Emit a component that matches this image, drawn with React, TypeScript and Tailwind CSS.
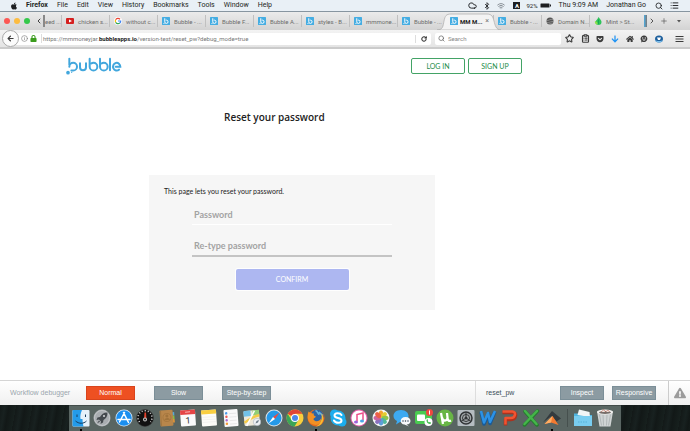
import type { ReactNode } from 'react';
import {
  Bluetooth,
  ChevronLeft,
  ChevronRight,
  ClipboardList,
  Cloud,
  Info,
  List,
  Plus,
  RotateCw,
  Search,
  Star,
  Wifi,
} from 'lucide-react';
import { FaApple, FaArrowDown, FaArrowLeft, FaExclamationTriangle, FaGetPocket, FaHome, FaLock } from 'react-icons/fa';

const menus = ['File', 'Edit', 'View', 'History', 'Bookmarks', 'Tools', 'Window', 'Help'];

const tabs = [
  { icon: 'youtube', title: 'chicken s...' },
  { icon: 'google', title: 'without c...' },
  { icon: 'bubble', title: 'Bubble - ...' },
  { icon: 'bubble', title: 'Bubble F...' },
  { icon: 'bubble', title: 'Bubble A...' },
  { icon: 'bubble', title: 'styles - B...' },
  { icon: 'bubble', title: 'mmmone...' },
  { icon: 'bubble', title: 'Bubble - ...' },
  { icon: 'bubble', title: 'MM M...', active: true },
  { icon: 'bubble', title: 'Bubble - ...' },
  { icon: 'globe', title: 'Domain N...' },
  { icon: 'mint', title: 'Mint > St...' },
];

const speeds = ['Normal', 'Slow', 'Step-by-step'];

function Favicon({ kind }: { kind: string }) {
  return (
    <svg viewBox="0 0 16 16" className="size-2 shrink-0" aria-hidden="true">
      {kind === 'youtube' && (
        <>
          <rect y="2" width="16" height="12" rx="2" fill="#d5201f" />
          <path d="M6 5l6 3-6 3z" fill="#fff" />
        </>
      )}
      {kind === 'google' && (
        <>
          <circle cx="8" cy="8" r="8" fill="#fff" />
          <g fill="none" strokeWidth="2.4">
            <path d="M12 4.5A5.4 5.4 0 0 0 3.3 5.5" stroke="#ea4335" />
            <path d="M3.3 5.5a5.4 5.4 0 0 0 0 5" stroke="#fbbc05" />
            <path d="M3.3 10.5a5.4 5.4 0 0 0 8.3 1.6" stroke="#34a853" />
            <path d="M11.6 12.1A5.4 5.4 0 0 0 13.4 8H8" stroke="#4285f4" />
          </g>
        </>
      )}
      {kind === 'bubble' && (
        <>
          <rect width="16" height="16" rx="1" fill="#45ade2" />
          <path d="M5.5 2.5v7a3.3 3.3 0 1 0 3.3-3.2H7.5" fill="none" stroke="#fff" strokeWidth="1.9" />
          <circle cx="4" cy="13" r="1.2" fill="#fff" />
        </>
      )}
      {kind === 'globe' && (
        <>
          <circle cx="8" cy="8" r="7" fill="#555" />
          <path d="M1 7c5 1 7-4 13-2M2 11c5 1 8-3 13-2M5 14c4 0 6-2 8-2" fill="none" stroke="#bbb" strokeWidth="1" />
        </>
      )}
      {kind === 'mint' && (
        <>
          <path d="M9 0c4 5 6 7 6 10a6 6 0 0 1-12 0c0-3 4-5 6-10z" fill="#2fc45a" />
          <path d="M2 8c4 1 6 3 5 7-4 0-6-3-5-7z" fill="#8be04a" />
          <path d="M9 5v9" stroke="#0d9c55" strokeWidth="1.5" />
        </>
      )}
    </svg>
  );
}

function MenuBar() {
  return (
    <header className="flex h-[11px] items-center bg-[#e9f0f6] pr-[11px] pl-[10px] text-[7px] text-[#1d1f22]">
      <FaApple className="size-2 shrink-0" />
      <nav className="ml-2 flex flex-1 gap-[9px]">
        <strong className="font-bold">Firefox</strong>
        {menus.map((menu) => (
          <span key={menu}>{menu}</span>
        ))}
      </nav>
      <div className="flex items-center">
        <Cloud className="size-[9px]" strokeWidth={2.5} />
        <Bluetooth className="ml-[6px] size-2" strokeWidth={2.5} />
        <Wifi className="ml-[6px] size-2 text-[#8b9299]" strokeWidth={3} />
        <span className="ml-2 flex size-[7px] items-center justify-center bg-[#1d1f22] text-[6px] font-bold text-white">A</span>
        <span className="ml-[6px] text-[6px]">92%</span>
        <svg viewBox="0 0 22 10" className="ml-[2px] h-[5px] w-[11px]" aria-hidden="true">
          <rect x="1" y="1" width="18" height="8" rx="1" fill="#1d1f22" />
          <path d="M21 3v4" stroke="#1d1f22" strokeWidth="2" />
        </svg>
        <span className="ml-2">Thu 9:09 AM</span>
        <span className="ml-2">Jonathan Go</span>
        <Search className="ml-[9px] size-2" strokeWidth={2.5} />
        <List className="ml-[7px] size-[9px]" strokeWidth={2.5} />
      </div>
    </header>
  );
}

function TabStrip() {
  return (
    <div className="flex h-[19px] items-center border-t border-[#8795a0] bg-linear-to-b from-[#ebebeb] to-[#d3d3d3] text-[6px] text-[#6b6b6b]">
      <div className="flex w-[35px] shrink-0 items-center gap-1 pl-1">
        <span className="size-[6px] rounded-full bg-[#fc5753]" />
        <span className="size-[6px] rounded-full bg-[#fdbc40]" />
        <span className="size-[6px] rounded-full bg-[#34c84a]" />
      </div>
      <ChevronLeft className="size-2 shrink-0 text-[#444]" strokeWidth={3} />
      <div className="flex h-3 w-[18px] shrink-0 items-center overflow-hidden border-l-2 border-[#888] whitespace-nowrap">eed ...</div>
      <div className="flex min-w-0 flex-1 self-stretch" role="tablist">
        {tabs.map((tab, i) =>
          tab.active ? (
            <div key={i} role="tab" aria-selected="true" className="relative flex w-12 shrink-0 items-center pl-[5px] font-bold text-[#222]">
              <svg viewBox="0 0 64 18" preserveAspectRatio="none" className="absolute inset-y-0 -left-2 h-full w-16" aria-hidden="true">
                <path d="M0 18c6 0 6-4 7-9s2-7 7-7h36c5 0 6 3 7 7s2 9 7 9z" fill="#f3f3f3" stroke="#aaa" strokeWidth=".7" />
              </svg>
              <span className="relative flex items-center gap-[2px] whitespace-nowrap">
                <Favicon kind={tab.icon} />
                {tab.title}
              </span>
              <button aria-label="Close tab" className="relative ml-auto pr-1 text-[7px] font-normal text-[#777]">×</button>
            </div>
          ) : (
            <div key={i} role="tab" aria-selected="false" className="flex w-12 shrink-0 items-center">
              <div className="flex h-3 w-full items-center gap-1 border-l border-[#c0c0c0] pl-1 whitespace-nowrap">
                <Favicon kind={tab.icon} />
                {tab.title}
              </div>
            </div>
          ),
        )}
      </div>
      <div className="flex shrink-0 items-center text-[#555]">
        <span className="mr-px h-3 w-[3px] bg-linear-to-r from-[#45ade2] to-[#777]" />
        <ChevronRight className="size-2" strokeWidth={3} />
        <Plus className="ml-1 size-2" strokeWidth={2} />
        <svg viewBox="0 0 8 8" className="mx-[9px] size-1" aria-hidden="true">
          <path d="M0 2h8L4 7z" fill="#555" />
        </svg>
      </div>
    </div>
  );
}

function AddressBar() {
  return (
    <div className="flex h-[19px] items-center border-b-2 border-[#cbcbcb] bg-linear-to-b from-[#f3f3f3] to-[#e4e4e4] pr-[6px] text-[7px] text-[#3c3c3c]">
      <button aria-label="Back" className="relative z-10 ml-[2px] flex size-[17px] shrink-0 items-center justify-center rounded-full border border-[#aaa] bg-[#fbfbfb]">
        <FaArrowLeft className="size-[7px]" />
      </button>
      <div className="-ml-1 flex h-3 min-w-0 flex-1 items-center rounded-xs bg-white pl-[6px]">
        <Info className="size-[7px] text-[#777]" />
        <FaLock className="mx-[2px] size-[7px] text-[#3c9c1e]" />
        <div className="ml-[2px] flex-1 border-l border-[#ddd] pl-px whitespace-nowrap text-[6px] text-[#777]">
          https://mmmoneyjar.<b className="font-bold text-[#222]">bubbleapps.io</b>/version-test/reset_pw?debug_mode=true
        </div>
        <button aria-label="Reload" className="flex h-2 w-4 items-center justify-center border-l border-[#ddd]">
          <RotateCw className="size-[6px] text-[#222]" strokeWidth={4} />
        </button>
      </div>
      <label className="ml-1 flex h-3 w-[126px] shrink-0 items-center gap-[3px] rounded-xs bg-white pl-[3px]">
        <Search className="size-[7px] text-[#666]" strokeWidth={2.5} />
        <input aria-label="Search" placeholder="Search" className="w-24 text-[6px] outline-none placeholder:text-[#888]" />
      </label>
      <div className="ml-1 flex w-[98px] shrink-0 items-center justify-between">
        <Star className="size-[9px]" strokeWidth={3} />
        <ClipboardList className="size-[9px]" strokeWidth={3} />
        <FaGetPocket className="size-2" />
        <FaArrowDown className="size-2 text-[#1f93f4]" />
        <FaHome className="size-2" />
        <svg viewBox="0 0 16 16" className="size-2" aria-hidden="true">
          <path d="M8 1a7 6.500 0 1 1-3 12.500L2 15l1-3A6.500 6.500 0 0 1 8 1z" fill="#3c3c3c" />
          <circle cx="5.500" cy="6" r="1.300" fill="#eee" />
          <circle cx="10.500" cy="6" r="1.300" fill="#eee" />
          <path d="M4.500 9h7c-1 3-6 3-7 0z" fill="#eee" />
        </svg>
        <svg viewBox="0 0 16 16" className="size-2" aria-hidden="true">
          <ellipse cx="8" cy="8" rx="8" ry="7" fill="#1d5f9c" />
          <path d="M0 9c3 4 13 4 16 0-1 8-15 8-16 0z" fill="#7cc0ee" />
          <path d="M4 5h8l-2 5H6z" fill="#fff" />
        </svg>
      </div>
      <svg viewBox="0 0 18 16" className="ml-3 h-2 w-[9px] shrink-0" aria-hidden="true">
        <path d="M1 3h16M1 8h16M1 13h16" stroke="#3c3c3c" strokeWidth="2" />
      </svg>
    </div>
  );
}

function BubbleLogo() {
  return (
    <svg viewBox="0 0 168 54" className="h-[18px] w-14" role="img" aria-label="bubble">
      <g fill="none" stroke="#42a7dd" strokeWidth="6" strokeLinecap="round">
        <path d="M10 5v17" />
        <path d="M10 29a11.500 11.500 0 1 1 11.500 11.500H16" />
        <path d="M42 19v12a9 9 0 0 0 18 0V19" />
        <path d="M71 5v24a11.500 11.500 0 1 0 11.500-11.500c-3 0-5 .5-7 2" />
        <path d="M102 5v24a11.500 11.500 0 1 0 11.500-11.500c-3 0-5 .5-7 2" />
        <path d="M132 5v35" />
        <path d="M149 29h14a11 11.500 0 1 0-4 9" />
      </g>
      <circle cx="6" cy="47" r="5.500" fill="#42a7dd" />
      <circle cx="17" cy="46" r="2" fill="#42a7dd" />
    </svg>
  );
}

function ResetPage() {
  return (
    <main className="flex-1 bg-white px-[66px] pt-2 font-['Lato',sans-serif]">
      <div className="max-w-[456px]">
        <div className="flex items-start justify-between">
          <BubbleLogo />
          <div className="flex gap-[3px] pt-px">
            {['LOG IN', 'SIGN UP'].map((label) => (
              <button key={label} className="h-4 w-[54px] rounded-xs border border-[#43a366] text-[7px] text-[#218c49]">
                {label}
              </button>
            ))}
          </div>
        </div>
        <h1 className="mt-[34px] ml-[158px] font-['Open_Sans',sans-serif] text-[10px] leading-4 font-semibold text-[#222]">Reset your password</h1>
        <form className="mt-[50px] ml-[83px] flex max-w-[286px] flex-col bg-[#f6f6f6] px-[15px] pt-[11px] pb-5" onSubmit={(e) => e.preventDefault()}>
          <p className="text-[7px] leading-[10px] text-[#222]">This page lets you reset your password.</p>
          <input
            type="password"
            aria-label="Password"
            placeholder="Password"
            className="mx-7 mt-[9px] h-5 border-b border-white px-[2px] text-[9px] font-bold outline-none placeholder:text-[#a3a3a3]"
          />
          <input
            type="password"
            aria-label="Re-type password"
            placeholder="Re-type password"
            className="mx-7 mt-[11px] h-[21px] border-b-2 border-[#c4c4c4] px-[2px] text-[9px] font-bold outline-none placeholder:text-[#a3a3a3]"
          />
          <button className="mt-3 h-[21px] w-[113px] self-center rounded-xs bg-[#adb7f1] text-[7px] text-white shadow-[0_0_1px_1px_#fff]">CONFIRM</button>
        </form>
      </div>
    </main>
  );
}

function Debugger() {
  return (
    <footer className="flex h-[25px] items-center border-t border-[#d5d5d5] bg-linear-to-b from-white to-[#f0f0f0] font-['Liberation_Sans',sans-serif] text-[7px]">
      <span className="w-[86px] pl-[10px] text-[#9aa6ad]">Workflow debugger</span>
      <div className="flex flex-1 gap-[19px]">
        {speeds.map((speed, i) => (
          <button
            key={speed}
            className={
              i === 0
                ? 'h-[14px] w-[49px] border border-[#d9441c] bg-[#ee5022] text-white'
                : 'h-[14px] w-[49px] border border-[#7b8e97] bg-[#8c9ba2] text-white'
            }
          >
            {speed}
          </button>
        ))}
      </div>
      <div className="flex items-center gap-2 self-stretch border-l border-[#ddd] pr-3 pl-[10px]">
        <span className="w-[66px] text-[#3b4e58]">reset_pw</span>
        <button className="h-[14px] w-11 border border-[#7b8e97] bg-[#8c9ba2] text-white">Inspect</button>
        <button className="h-[14px] w-11 border border-[#7b8e97] bg-[#8c9ba2] text-white">Responsive</button>
      </div>
      <div className="flex w-[22px] items-center justify-center self-stretch border-l border-[#ccc]">
        <FaExclamationTriangle className="size-3 text-[#9b9b9b]" />
      </div>
    </footer>
  );
}

function DockIcon({ label, running, children }: { label: string; running?: boolean; children: ReactNode }) {
  return (
    <button aria-label={label} className="relative size-[18px]">
      <svg viewBox="0 0 36 36" className="size-full" aria-hidden="true">
        {children}
      </svg>
      {running && <span className="absolute -bottom-1 left-2 size-[2px] bg-black" />}
    </button>
  );
}

function Dock() {
  return (
    <div className="flex h-[26px] justify-center bg-[#141b1a] bg-[repeating-linear-gradient(100deg,#131918_0px,#182120_5px,#121817_9px,#17201e_16px)]">
      <div className="flex w-[552px] items-start border-t border-[#434c4a] bg-[#596562] px-[3px] pt-[3px]">
        <div className="flex flex-1 justify-between">
          <DockIcon label="Finder" running>
            <rect x="1" y="2" width="34" height="33" rx="2" fill="#e6f1fa" />
            <path d="M3 2h17c-3 7-4 12-3 18h4c0 6 1 10 2 15H3a2 2 0 0 1-2-2V4a2 2 0 0 1 2-2z" fill="#249bea" />
            <path d="M10 11v5M27 11v5M7 24c7 6 16 6 22 0" fill="none" stroke="#173d60" strokeWidth="2" />
          </DockIcon>
          <DockIcon label="Launchpad">
            <circle cx="18" cy="18" r="17" fill="#a9adb1" />
            <circle cx="18" cy="18" r="15" fill="none" stroke="#c9cccf" strokeWidth="1.5" />
            <path d="M29 7c-8 0-12 4-15 9l-5 1-2 5 5-1 4 4-1 5 5-3 1-5c5-3 8-7 8-15z" fill="#44494e" />
            <path d="M12 23l-4 6 6-4" fill="#44494e" />
            <circle cx="22" cy="14" r="2" fill="#d8dadd" />
          </DockIcon>
          <DockIcon label="App Store">
            <circle cx="18" cy="18" r="17" fill="#e2edf7" />
            <circle cx="18" cy="18" r="15.500" fill="#1b8ff0" />
            <path d="M19 7L9 26M17 7l10 20M6 21h24" stroke="#fff" strokeWidth="3" strokeLinecap="round" />
          </DockIcon>
          <DockIcon label="Dashboard">
            <circle cx="18" cy="18" r="17" fill="#111" stroke="#3a3a3a" />
            <path d="M7 26a14 14 0 1 1 22 0" fill="none" stroke="#ddd" strokeWidth="3" strokeDasharray="2 4" />
            <path d="M17 7h3l1 14h-5z" fill="#e0402b" />
            <circle cx="18" cy="21" r="4" fill="#ccc" />
            <circle cx="18" cy="21" r="2" fill="#222" />
          </DockIcon>
          <DockIcon label="Contacts">
            <g transform="rotate(-4 18 18)">
              <path d="M29 7h4v7h-4z" fill="#57a9d8" />
              <path d="M29 14h4v7h-4z" fill="#8bbc45" />
              <path d="M29 21h4v7h-4z" fill="#e39636" />
              <rect x="4" y="2" width="26" height="32" rx="2" fill="#b8864b" />
              <path d="M6 3v30" stroke="#a27740" strokeWidth="2" />
              <circle cx="18" cy="17" r="8" fill="none" stroke="#a0733c" strokeWidth="1.500" />
              <circle cx="18" cy="14" r="3" fill="#a0733c" />
              <path d="M12 22c2-5 10-5 12 0z" fill="#a0733c" />
            </g>
          </DockIcon>
          <DockIcon label="Calendar">
            <g transform="rotate(-4 18 18)">
              <rect x="3" y="2" width="30" height="32" rx="2" fill="#fafafa" />
              <path d="M3 2h30v9H3z" fill="#e54445" />
              <path d="M13 6h10" stroke="#f9b3b3" strokeWidth="2" />
              <text x="18" y="29" textAnchor="middle" fontSize="18" fill="#333">1</text>
            </g>
          </DockIcon>
          <DockIcon label="Notes">
            <g transform="rotate(-4 18 18)">
              <rect x="3" y="2" width="30" height="32" rx="2" fill="#fcfcf8" />
              <path d="M3 2h30v8H3z" fill="#f9cf41" />
              <path d="M5 16h26M5 21h26M5 26h26" stroke="#e8e8e8" />
            </g>
          </DockIcon>
          <DockIcon label="Reminders">
            <g transform="rotate(-4 18 18)">
              <rect x="4" y="1" width="28" height="34" rx="2" fill="#fafafa" />
              <circle cx="9" cy="8" r="2.500" fill="#4e9be8" />
              <circle cx="9" cy="15" r="2.500" fill="#ef5b51" />
              <circle cx="9" cy="22" r="2.500" fill="#af67cf" />
              <circle cx="9" cy="29" r="2.500" fill="#f39c36" />
              <path d="M15 9h14M15 16h14M15 23h14M15 30h14" stroke="#d7d7d7" />
            </g>
          </DockIcon>
          <DockIcon label="Maps">
            <g transform="rotate(-5 18 18)">
              <rect x="2" y="3" width="31" height="30" rx="3" fill="#eee9da" />
              <path d="M2 3h14v11H2z" fill="#72c2e9" />
              <path d="M20 3h13v10H20z" fill="#92ce77" />
              <path d="M2 26c9-3 10-10 31-12" stroke="#f4cb4a" strokeWidth="5" fill="none" />
              <path d="M6 33L24 4" stroke="#fff" strokeWidth="3" />
            </g>
            <circle cx="28" cy="26" r="7.500" fill="#edf0f3" stroke="#9fa9b0" />
            <path d="M25 29l2-5 5-2-2 5z" fill="#6d7d89" />
          </DockIcon>
          <DockIcon label="Safari">
            <circle cx="18" cy="18" r="17" fill="#dce3e8" />
            <circle cx="18" cy="18" r="15" fill="#2499e8" />
            <path d="M29 7L20 20l-4-4z" fill="#f04b40" />
            <path d="M7 29l9-13 4 4z" fill="#fff" />
          </DockIcon>
          <DockIcon label="Chrome">
            <circle cx="18" cy="18" r="17" fill="#f8cf3e" />
            <path d="M18 18L3.300 9.500A17 17 0 0 1 32.700 9.500H18z" fill="#df4636" />
            <path d="M3.300 9.500A17 17 0 0 0 17 35l8-13-14 0z" fill="#3ba557" />
            <circle cx="18" cy="18" r="8" fill="#fff" />
            <circle cx="18" cy="18" r="6" fill="#4a88ea" />
          </DockIcon>
          <DockIcon label="Firefox" running>
            <circle cx="18" cy="18" r="17" fill="#e66a20" />
            <circle cx="20" cy="14" r="13" fill="#2d64a6" />
            <path d="M17 3c6 2 3 6 8 8M24 6l7 7" stroke="#67b3dc" strokeWidth="3" fill="none" />
            <path d="M3 5c4 3 7 4 11 4-2 3 1 5 4 6-2 3-5 3-5 6 4 6 12 4 15-2 1 10-7 15-15 12C2 28-1 16 3 5z" fill="#f39124" />
            <path d="M29 8c8 11 2 26-11 27 8-4 13-11 11-27z" fill="#f7bd32" />
          </DockIcon>
          <DockIcon label="Skype">
            <circle cx="18" cy="18" r="15" fill="#1baeee" />
            <circle cx="11" cy="10" r="9" fill="#1baeee" />
            <circle cx="26" cy="26" r="9" fill="#1baeee" />
            <path d="M25 12c-3-5-14-5-14 1 0 7 14 3 14 10 0 6-12 6-15 0" fill="none" stroke="#fff" strokeWidth="4" strokeLinecap="round" />
          </DockIcon>
          <DockIcon label="iTunes">
            <circle cx="18" cy="18" r="17" fill="#e460a8" />
            <circle cx="18" cy="18" r="15" fill="#fff" />
            <path d="M14 25V11l12-3v15" fill="none" stroke="#ed4f88" strokeWidth="3" />
            <ellipse cx="12" cy="26" rx="4" ry="3" fill="#9c62dc" />
            <ellipse cx="24" cy="24" rx="4" ry="3" fill="#4ca6e8" />
          </DockIcon>
          <DockIcon label="Photos">
            <circle cx="18" cy="18" r="17" fill="#f6f6f6" />
            <g>
              <ellipse cx="18" cy="10" rx="4.500" ry="7" fill="#f4a02d" />
              <ellipse cx="18" cy="10" rx="4.500" ry="7" fill="#e4cb31" transform="rotate(45 18 18)" />
              <ellipse cx="18" cy="10" rx="4.500" ry="7" fill="#91c44b" transform="rotate(90 18 18)" />
              <ellipse cx="18" cy="10" rx="4.500" ry="7" fill="#52b99b" transform="rotate(135 18 18)" />
              <ellipse cx="18" cy="10" rx="4.500" ry="7" fill="#5d9ed8" transform="rotate(180 18 18)" />
              <ellipse cx="18" cy="10" rx="4.500" ry="7" fill="#8a72bf" transform="rotate(225 18 18)" />
              <ellipse cx="18" cy="10" rx="4.500" ry="7" fill="#cf659d" transform="rotate(270 18 18)" />
              <ellipse cx="18" cy="10" rx="4.500" ry="7" fill="#ec6047" transform="rotate(315 18 18)" />
            </g>
          </DockIcon>
          <DockIcon label="Messages">
            <path d="M16 2c20 0 20 24 1 24l-3 0-8 5 2-7C-4 18 0 2 16 2z" fill="#3daaf2" />
            <path d="M25 16c13 0 13 15 2 15l5 4-9-4c-11-1-10-15 2-15z" fill="#f7f9fb" />
            <circle cx="20" cy="24" r="1.500" fill="#345" />
            <circle cx="25" cy="24" r="1.500" fill="#345" />
            <circle cx="30" cy="24" r="1.500" fill="#345" />
          </DockIcon>
          <DockIcon label="FaceTime">
            <rect x="0" y="4" width="34" height="26" rx="4" fill="#4acb51" />
            <rect x="4" y="11" width="16" height="13" rx="2" fill="#fff" />
            <circle cx="27" cy="26" r="8" fill="#fff" />
            <path d="M23 22c0 5 3 8 8 8l1-3-3-1-1 1-3-3 1-1-1-3z" fill="#38b846" />
            <circle cx="29" cy="7" r="7" fill="#f2463f" />
            <path d="M29 3v8" stroke="#fff" strokeWidth="2" />
          </DockIcon>
          <DockIcon label="uTorrent">
            <circle cx="18" cy="18" r="17" fill="#68b545" />
            <path d="M10 8l4 22M12 17c1 8 11 8 11 0l-1-9M23 17c0 6 3 8 7 6" fill="none" stroke="#fff" strokeWidth="4.500" />
          </DockIcon>
          <DockIcon label="System Preferences">
            <rect x="1" y="2" width="34" height="32" rx="2" fill="#b5bcc1" />
            <circle cx="18" cy="18" r="12" fill="#a0a5a8" stroke="#303335" strokeWidth="3" />
            <circle cx="18" cy="18" r="7" fill="#a9adaf" stroke="#35393a" strokeWidth="2" />
            <path d="M18 18V7M18 18l-9 6M18 18l9 6" stroke="#303335" strokeWidth="2" />
            <circle cx="18" cy="18" r="3" fill="#303335" />
          </DockIcon>
          <DockIcon label="Word">
            <path d="M4 6l6 24 9-20 3 19L32 5" fill="none" stroke="#1b5b97" strokeWidth="7" strokeLinejoin="round" />
            <path d="M4 4l6 23 8-19 4 18L32 4" fill="none" stroke="#2c92e5" strokeWidth="5" strokeLinejoin="round" />
          </DockIcon>
          <DockIcon label="PowerPoint">
            <path d="M5 7h20c10 0 7 14-3 14H11v12" fill="none" stroke="#ad321e" strokeWidth="7" strokeLinejoin="round" />
            <path d="M5 5h20c8 0 6 13-3 13H11v13" fill="none" stroke="#f05331" strokeWidth="5" strokeLinejoin="round" />
          </DockIcon>
          <DockIcon label="Excel">
            <path d="M6 5l24 27M31 4L5 32" stroke="#247d2d" strokeWidth="7" strokeLinecap="round" />
            <path d="M6 4l23 26M30 4L5 30" stroke="#45b54a" strokeWidth="5" strokeLinecap="round" />
          </DockIcon>
          <DockIcon label="Sublime" running>
            <path d="M18 4L36 19 27 25 17 14 0 27z" fill="#333a3e" />
            <path d="M19 14l12 18-15-5-13 3z" fill="#f37a30" />
            <path d="M19 14l-3 13-13 3z" fill="#ffae64" />
          </DockIcon>
        </div>
        <div className="mx-[6px] h-[18px] w-px bg-[#46504e]" />
        <div className="flex gap-1 pr-1">
          <DockIcon label="Downloads">
            <path d="M0 9h13l3 3h20v21H0z" fill="#4fb4de" />
            <path d="M7 12l3-11 21 5 1 10z" fill="#f2f5f6" />
            <path d="M0 14h36v20H0z" fill="#79cdf0" />
            <path d="M8 26h20" stroke="#62bbe0" strokeWidth="3" strokeDasharray="3 2" />
          </DockIcon>
          <DockIcon label="Trash">
            <path d="M2 5h32l-5 30H7z" fill="#d0d4d4" />
            <path d="M7 11l4 22M14 11l1 22M22 11l-1 22M29 11l-4 22" stroke="#a7adad" strokeWidth="1.500" />
            <ellipse cx="18" cy="6" rx="16" ry="5" fill="#f1f1ef" />
            <ellipse cx="18" cy="7" rx="12" ry="3" fill="#77706b" />
            <path d="M10 6l6-5 3 5 5-4 3 4" fill="#e9e5df" stroke="#b64f3b" />
          </DockIcon>
        </div>
      </div>
    </div>
  );
}

export default function App() {
  return (
    <div className="flex min-h-screen flex-col bg-white font-['Roboto',sans-serif]">
      <MenuBar />
      <TabStrip />
      <AddressBar />
      <ResetPage />
      <Debugger />
      <Dock />
    </div>
  );
}
